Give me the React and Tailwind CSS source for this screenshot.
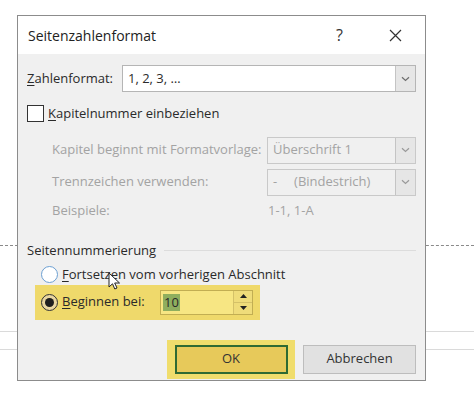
import React from "react";

const font = { fontFamily: '"Open Sans", "Noto Sans", sans-serif' };

function Chevron({ muted }) {
  return (
    <svg width="9" height="6" viewBox="0 0 9 6" className={muted ? "text-[#9a9a9a]" : "text-[#6e6e6e]"}>
      <path d="M1 1.2l3.5 3.3L8 1.2" fill="none" stroke="currentColor" strokeWidth="1.2" />
    </svg>
  );
}

function Select({ value, disabled, className }) {
  return (
    <div
      className={`flex h-[27px] items-stretch border ${
        disabled ? "border-[#c9c9c9] bg-[#f0f0f0] text-[#a3a3a3]" : "border-[#b5b5b5] bg-white text-[#2b2b2b]"
      } ${className}`}
    >
      <div className="flex flex-1 items-center pl-[5px] whitespace-pre">{value}</div>
      <div className="flex w-[20px] items-center justify-center border-l border-[#c4c4c4] bg-[#e6e6e6]">
        <Chevron muted={disabled} />
      </div>
    </div>
  );
}

export default function App() {
  return (
    <div className="relative h-[401px] w-[474px] overflow-hidden bg-white text-[13px]" style={font}>
      {/* page lines behind the dialog */}
      <div className="absolute left-0 right-0 top-[245px] border-t border-dashed border-[#8a8a8a]" />
      <div className="absolute left-0 right-0 top-[331px] border-t border-[#dadada]" />
      <div className="absolute left-0 right-0 top-[349px] border-t border-[#dadada]" />

      <div className="relative ml-[17px] mt-[15px] flex h-[366px] w-[409px] flex-col border border-[#8c8c8c] bg-[#f0f0f0]">
        {/* title bar */}
        <div className="flex h-[38px] items-center bg-white pl-[10px] text-[14px] text-[#222]">
          <span className="flex-1">Seitenzahlenformat</span>
          <span className="mr-[46px] text-[16px] text-[#333]">?</span>
          <svg width="13" height="13" viewBox="0 0 13 13" className="mr-[23px]">
            <path d="M1 1l11 11M12 1L1 12" stroke="#333" strokeWidth="1.2" />
          </svg>
        </div>

        <div className="flex flex-1 flex-col px-[9px] text-[#2a2a2a]">
          <div className="mt-[11px] flex items-center">
            <span className="w-[95px]">
              <span className="underline underline-offset-2">Z</span>ahlenformat:
            </span>
            <Select value="1, 2, 3, …" className="flex-1" />
          </div>

          <div className="mt-[12px] flex items-center">
            <div className="h-[17px] w-[17px] border border-[#333] bg-white" />
            <span className="ml-[4px]">
              <span className="underline underline-offset-2">K</span>apitelnummer einbeziehen
            </span>
          </div>

          <div className="mt-[13px] flex items-center pl-[25px] text-[#a3a3a3]">
            <span className="w-[215px]">Kapitel beginnt mit Formatvorlage:</span>
            <Select value="Überschrift 1" disabled className="flex-1" />
          </div>

          <div className="mt-[5px] flex items-center pl-[25px] text-[#a3a3a3]">
            <span className="w-[215px]">Trennzeichen verwenden:</span>
            <Select value={"-     (Bindestrich)"} disabled className="flex-1" />
          </div>

          <div className="mt-[2px] flex h-[26px] items-center pl-[25px] text-[#a3a3a3]">
            <span className="w-[216px]">Beispiele:</span>
            <span>1-1, 1-A</span>
          </div>

          <div className="mt-[17px] flex items-center">
            <span>Seitennummerierung</span>
            <div className="ml-[8px] h-px flex-1 bg-[#dcdcdc]" />
          </div>

          <div className="mt-[5px] flex items-center pl-[14px]">
            <div className="h-[17px] w-[17px] rounded-full border border-[#6c9fd2] bg-white" />
            <span className="ml-[4px]">
              <span className="underline underline-offset-2">F</span>ortsetzen vom vorherigen Abschnitt
            </span>
          </div>

          <div className="ml-[8px] flex h-[35px] w-[225px] items-center bg-[#efd96b] pl-[6px]">
            <div className="flex h-[17px] w-[17px] items-center justify-center rounded-full border border-[#333] bg-[#e9d6a0]">
              <div className="h-[9px] w-[9px] rounded-full bg-[#1e1e1e]" />
            </div>
            <span className="ml-[4px] w-[98px]">
              <span className="underline underline-offset-2">B</span>eginnen bei:
            </span>
            <div className="flex h-[25px] w-[93px] items-stretch border border-[#c2ae52] bg-[#f7e683]">
              <div className="flex flex-1 items-center pl-[2px]">
                <span className="bg-[#8fae5e] px-px leading-[17px]">10</span>
              </div>
              <div className="flex w-[19px] flex-col border-l border-[#d4c168]">
                <div className="flex flex-1 items-center justify-center border-b border-[#d4c168] bg-[#efdc7a]">
                  <svg width="7" height="4" viewBox="0 0 7 4"><path d="M0 4L3.5 0 7 4z" fill="#222" /></svg>
                </div>
                <div className="flex flex-1 items-center justify-center bg-[#efdc7a]">
                  <svg width="7" height="4" viewBox="0 0 7 4"><path d="M0 0L3.5 4 7 0z" fill="#222" /></svg>
                </div>
              </div>
            </div>
          </div>

          <div className="mt-[20px] flex items-center justify-end">
            <div className="flex h-[39px] w-[128px] items-center justify-center bg-[#f0dd6c]">
              <div className="flex h-[29px] w-[113px] items-center justify-center border-2 border-[#2f6a33] bg-[#e7c95a] text-[#333]">
                OK
              </div>
            </div>
            <div className="ml-[8px] flex h-[29px] w-[113px] items-center justify-center border border-[#bdbdbd] bg-[#e1e1e1] text-[#333]">
              Abbrechen
            </div>
          </div>
        </div>

        {/* mouse cursor */}
        <svg width="12" height="19" viewBox="0 0 12 19" className="absolute left-[90px] top-[256px]">
          <path d="M1 1v14l3.5-3.2 2.3 5.2 2.2-1-2.3-5h4.8z" fill="#fff" stroke="#222" strokeWidth="1" />
        </svg>
      </div>
    </div>
  );
}
